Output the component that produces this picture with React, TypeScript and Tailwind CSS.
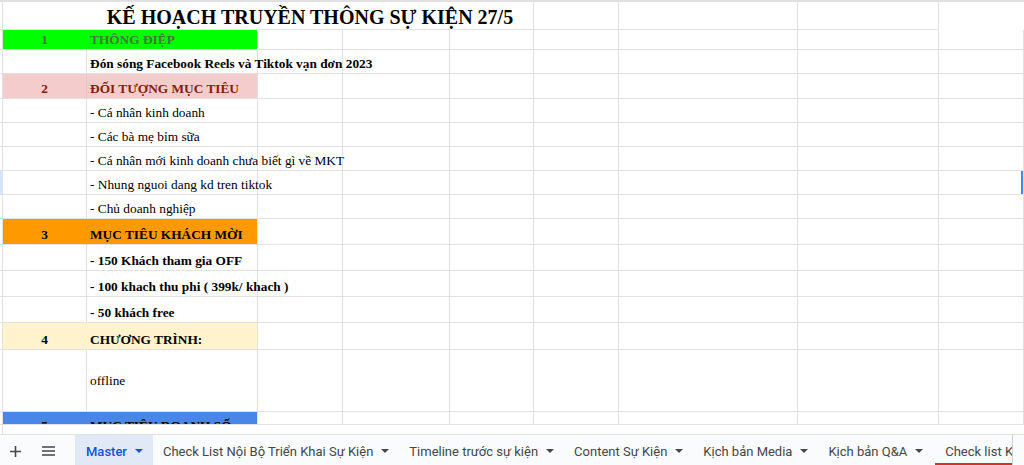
const COLS =
  "grid grid-cols-[3px_84px_171px_85px_107px_84px_85px_179px_141px_1fr]";

type Row = {
  h: string;
  num?: string;
  text?: string;
  fill?: string;
  color?: string;
  bold?: boolean;
  middle?: boolean;
  selected?: boolean;
};

const rows: Row[] = [
  { h: "h-[20px]", num: "1", text: "THÔNG ĐIỆP", fill: "bg-[#00ff00] border-r-[#00ff00]", color: "text-[#457a32]", bold: true },
  { h: "h-[24px]", text: "Đón sóng Facebook Reels và Tiktok vạn đơn 2023", bold: true },
  { h: "h-[25px]", num: "2", text: "ĐỐI TƯỢNG MỤC TIÊU", fill: "bg-[#f4cccc] border-r-[#ebc4c4]", color: "text-[#85200c]", bold: true },
  { h: "h-[24px]", text: "- Cá nhân kinh doanh" },
  { h: "h-[24px]", text: "- Các bà mẹ bỉm sữa" },
  { h: "h-[24px]", text: "- Cá nhân mới kinh doanh chưa biết gì về MKT" },
  { h: "h-[24px]", text: "- Nhung nguoi dang kd tren tiktok", selected: true },
  { h: "h-[24px]", text: "- Chủ doanh nghiệp" },
  { h: "h-[26px]", num: "3", text: "MỤC TIÊU KHÁCH MỜI", fill: "bg-[#ff9900] border-r-[#ff9900]", bold: true },
  { h: "h-[26px]", text: "- 150 Khách tham gia OFF", bold: true },
  { h: "h-[26px]", text: "- 100 khach thu phi ( 399k/ khach )", bold: true },
  { h: "h-[26px]", text: "- 50 khách free", bold: true },
  { h: "h-[27px]", num: "4", text: "CHƯƠNG TRÌNH:", fill: "bg-[#fff2cc] border-r-[#fff2cc]", bold: true },
  { h: "h-[62px]", text: "offline", middle: true },
  { h: "h-[24px]", num: "5", text: "MỤC TIÊU DOANH SỐ", fill: "bg-[#4a86e8] border-r-[#4a86e8]", bold: true },
];

const line = "border-b border-r border-[#e2e2e2]";

function SheetRow({ row }: { row: Row }) {
  const align = row.middle ? "items-center" : "items-end pb-[2px]";
  const weight = row.bold ? "font-bold" : "font-normal";
  const color = row.color ?? "text-black";
  return (
    <div className={`${COLS} ${row.h}`}>
      <div className={`${line} ${row.selected ? "bg-[#d3e3fd]" : ""}`} />
      <div className={`${line} ${row.fill ?? ""} flex justify-center ${align} ${weight} ${color}`}>
        {row.num}
      </div>
      <div
        className={`${line} ${row.fill ? row.fill.split(" ")[0] : ""} flex pl-[3px] ${align} ${weight} ${color} whitespace-nowrap relative z-10`}
      >
        {row.text}
      </div>
      <div className={line} />
      <div className={line} />
      <div className={line} />
      <div className={line} />
      <div className={line} />
      <div className={line} />
      <div className={`${line} relative`}>
        {row.selected && <div className="absolute right-0 top-0 bottom-0 w-[2px] bg-[#4a86e8]" />}
      </div>
    </div>
  );
}

function Caret({ className = "fill-[#444746]" }: { className?: string }) {
  return (
    <svg width="8" height="4" viewBox="0 0 8 4" className={`shrink-0 ${className}`}>
      <path d="M0 0h8L4 4z" />
    </svg>
  );
}

const tabs = [
  "Check List Nội Bộ Triển Khai Sự Kiện",
  "Timeline trước sự kiện",
  "Content Sự Kiện",
  "Kịch bản Media",
  "Kịch bản Q&A",
];

function TabBar() {
  return (
    <div className="h-[31px] flex bg-[#f9fbfd] border-t border-[#e1e3e1] font-['Roboto',sans-serif] text-[13px] text-[#444746]">
      <div className="w-[1013px] shrink-0 flex border-r border-[#d0d0d0] overflow-hidden">
        <div className="w-[30px] shrink-0 flex items-center justify-center pt-[2px]">
          <svg width="11" height="11" viewBox="0 0 11 11" className="stroke-[#444746]">
            <path d="M5.5 0v11M0 5.5h11" strokeWidth="1.6" />
          </svg>
        </div>
        <div className="w-[36px] shrink-0 flex items-center justify-center pt-[2px]">
          <svg width="13" height="10" viewBox="0 0 13 10" className="stroke-[#444746]">
            <path d="M0 1h13M0 5h13M0 9h13" strokeWidth="1.5" />
          </svg>
        </div>
        <div className="w-[9px] shrink-0" />
        <div className="shrink-0 flex items-center gap-[8px] pl-[11px] pr-[10px] pt-[2px] bg-[#e1e9f7] text-[#0b57d0] font-medium">
          <span>Master</span>
          <Caret className="fill-[#0b57d0]" />
        </div>
        {tabs.map((t) => (
          <div key={t} className="shrink-0 flex items-center gap-[8px] px-[10px] pt-[2px] whitespace-nowrap">
            <span>{t}</span>
            <Caret />
          </div>
        ))}
        <div className="shrink-0 flex items-center pl-[10px] ml-[2px] pt-[2px] whitespace-nowrap relative">
          <span>Check list Kịch bản</span>
          <div className="absolute left-0 right-0 bottom-0 h-[2px] bg-[#d93025]" />
        </div>
      </div>
    </div>
  );
}

export default function App() {
  return (
    <div className="w-[1024px] h-[465px] bg-white overflow-hidden flex flex-col font-['Liberation_Serif',serif] text-[13.33px] leading-[15px]">
      <div className="h-[425px] shrink-0 overflow-hidden border-b border-[#e2e2e2]">
        <div className="h-[2px] bg-[#e1e1e1]" />
        <div className={`${COLS} h-[28px]`}>
          <div className={line} />
          <div className="col-span-5 border-b border-r border-[#e2e2e2] flex items-end justify-center pl-[84px] text-[20px] leading-[24px] font-bold">
            KẾ HOẠCH TRUYỀN THÔNG SỰ KIỆN 27/5
          </div>
          <div className={line} />
          <div className={line} />
          <div className={line} />
        </div>
        {rows.map((r, i) => (
          <SheetRow key={i} row={r} />
        ))}
      </div>
      <div className="h-[9px] shrink-0 flex">
        <div className="w-[3px] border-r border-[#e2e2e2]" />
      </div>
      <TabBar />
    </div>
  );
}
